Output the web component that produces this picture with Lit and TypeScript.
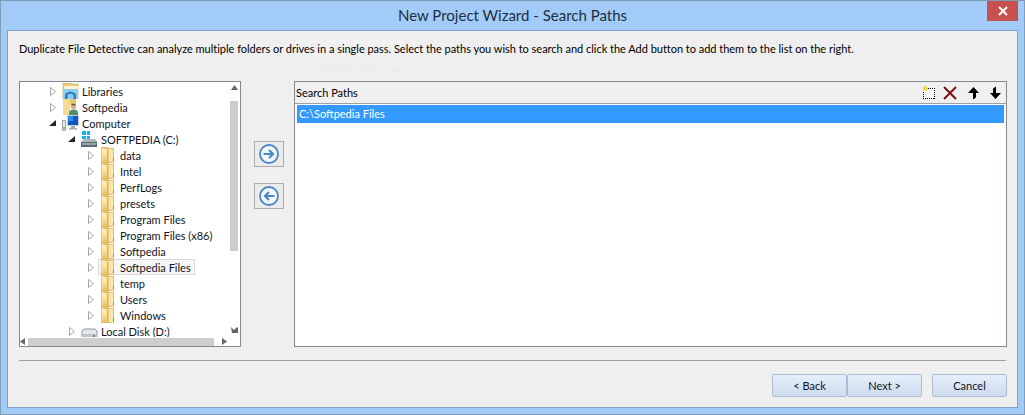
import { LitElement, html, css, svg } from "lit";
import { customElement } from "lit/decorators.js";

const folder = svg`<svg width="16" height="16" viewBox="0 0 16 16"><defs><linearGradient id="fg" x1="0" x2="0" y1="0" y2="1"><stop offset="0" stop-color="#fff0b4"/><stop offset=".6" stop-color="#f7dc8c"/><stop offset="1" stop-color="#e2bb5e"/></linearGradient></defs><path d="M1 0h7l1 1h5v15H1z" fill="#e3c16c"/><path d="M8 2h5v13H8z" fill="#f8e6a8"/><path d="M1 1l7 2v13l-7-1z" fill="url(#fg)"/><path d="M1 1v14h1V1z" fill="#f0cf7c"/><path d="M7 3h1.500v13H7z" fill="#d9ae55"/><path d="M13 11h1v3h-1z" fill="#4aa3d8"/></svg>`;
const drive = svg`<svg width="17" height="16" viewBox="0 0 17 16"><path d="M1 0h4v4H1zM6 0h3v4H6zM1 5h4v3H1zM6 5h3v3H6z" fill="#12b5ee"/><path d="M1 10l2-2h11l2 2v2H1z" fill="#aeb6bd"/><path d="M0 11h16v5H0z" fill="#5d6a76"/><path d="M1 12h14v2H1z" fill="#98a3ab"/><path d="M12 12h2v1h-2z" fill="#6fcf5a"/></svg>`;
const disk = svg`<svg width="17" height="16" viewBox="0 0 17 16"><path d="M1 8l2-2h11l2 2v8H1z" fill="#e4e7e9" stroke="#8d949a"/><path d="M1 11h15v5H1z" fill="#bcc2c7"/><path d="M12 12h2v3h-2z" fill="#5aa84a"/></svg>`;
const libs = svg`<svg width="17" height="16" viewBox="0 0 17 16"><path d="M1 0h7l1 1h7v15H1z" fill="#eccb7a" stroke="#caa656" stroke-width=".6"/><path d="M2 3h14v4H2z" fill="#fdf3cf"/><path d="M1 6h15v10H1z" fill="#8fcdf0"/><path d="M3 16v-5q5.500-5 11 0v5h-2.500v-4q-3-2.500-6 0v4z" fill="#2c7fc0"/></svg>`;
const user = svg`<svg width="17" height="16" viewBox="0 0 17 16"><path d="M1 0h7v16H1z" fill="#f5dc95"/><path d="M8 0h6v6H8z" fill="#e6c56f"/><circle cx="11.500" cy="7.500" r="2.800" fill="#d9b08c"/><path d="M7 16v-2q0-3.500 4.500-3.500T16 14v2z" fill="#4f8f6a"/><path d="M9 6q2.500-3 5 0l-1 .5h-3z" fill="#7a5a3c"/></svg>`;
const computer = svg`<svg width="17" height="16" viewBox="0 0 17 16"><path d="M0.500 5.500h3v10h-3z" fill="#e4e7e9" stroke="#7b858c" stroke-width=".7"/><path d="M1 12h2v2H1z" fill="#74c95c"/><path d="M5 0h12v11H5z" fill="#c7ced3"/><path d="M6 1h10v9H6z" fill="#1156c4"/><path d="M6 1h5v5H6z" fill="#2f8ee8"/><path d="M9 11h4v2H9zM7 13h8v1.500H7z" fill="#a3abb1"/></svg>`;

const open = svg`<svg width="9" height="8" viewBox="0 0 9 8"><path d="M7 1v6H0z" fill="#262626"/></svg>`;
const closed = svg`<svg width="9" height="9" viewBox="0 0 9 9"><path d="M1.500.5l5 4-5 4z" fill="#fff" stroke="#a6a6a6"/></svg>`;

const rows: [string, number, any, boolean, boolean?][] = [
  ["Libraries", 0, libs, false],
  ["Softpedia", 0, user, false],
  ["Computer", 0, computer, true],
  ["SOFTPEDIA (C:)", 1, drive, true],
  ["data", 2, folder, false],
  ["Intel", 2, folder, false],
  ["PerfLogs", 2, folder, false],
  ["presets", 2, folder, false],
  ["Program Files", 2, folder, false],
  ["Program Files (x86)", 2, folder, false],
  ["Softpedia", 2, folder, false],
  ["Softpedia Files", 2, folder, false, true],
  ["temp", 2, folder, false],
  ["Users", 2, folder, false],
  ["Windows", 2, folder, false],
  ["Local Disk (D:)", 1, disk, false],
];

@customElement("app-root")
export class AppRoot extends LitElement {
  static styles = css`
    :host { display: block; width: 1025px; height: 415px; overflow: hidden; font-family: Lato, "Noto Sans", sans-serif; font-size: 11px; color: #000; }
    * { box-sizing: border-box; }
    .frame { width: 1025px; height: 415px; background: #a3cbf7; border: 1px solid #7f9db9; display: flex; flex-direction: column; padding: 0 6px 6px; }
    .titlebar { height: 29px; flex: none; position: relative; display: flex; align-items: center; justify-content: center; }
    .title { font-size: 15px; color: #1b2f44; padding-bottom: 1px; }
    .close { position: absolute; right: 0; top: 0; width: 31px; height: 20px; background: #c75050; display: flex; align-items: center; justify-content: center; }
    .body { flex: 1; background: #efefef; border: 1px solid #7f9fc4; padding: 9px 11px 0 11px; display: flex; flex-direction: column; position: relative; }
    .intro { height: 17px; line-height: 17px; white-space: nowrap; position: relative; z-index: 1; letter-spacing: -0.02px; }
    .mark { position: absolute; left: 285px; top: 3px; font-size: 21px; letter-spacing: 1.500px; color: #f4f4f4; pointer-events: none; font-weight: 700; }
    .mark2 { position: absolute; left: 305px; top: 32px; font-size: 10.500px; color: #fafafa; text-shadow: 0 0 1px #cfcfcf; pointer-events: none; }
    .main { display: flex; margin-top: 24px; height: 266px; }
    .tree { width: 222px; border: 1px solid #828790; background: #fff; display: grid; grid-template-columns: 210px 10px; grid-template-rows: 255px 9px; flex: none; }
    .rows { padding-top: 1px; overflow: hidden; }
    .row { height: 16px; line-height: 14px; display: flex; align-items: center; white-space: nowrap; color: #10131f; }
    .row:last-child { height: 14px; align-items: flex-start; }
    .arrow { width: 13px; flex: none; display: flex; align-items: center; justify-content: flex-start; height: 16px; }
    .icon { width: 20px; height: 16px; flex: none; display: flex; align-items: center; }
    .lbl { padding-top: 2px; }
    .hl { display: flex; align-items: center; height: 16px; flex: none; }
    .hl.on { background: #f6f6f6; border: 1px solid #d9d9d9; margin-left: -2px; padding-left: 1px; width: 97px; }
    .hl.on .lbl { padding-top: 1px; }
    .vbar { grid-row: 1; grid-column: 2; display: flex; flex-direction: column; align-items: stretch; padding-right: 2px; }
    .vbar .a { height: 19px; display: flex; justify-content: center; padding-top: 3px; }
    .vbar .b { height: 11px; display: flex; justify-content: center; }
    .vbar .t { height: 150px; background: #cdcdcd; }
    .vbar .sp { flex: 1; }
    .hbar { grid-row: 2; grid-column: 1; display: flex; align-items: stretch; }
    .hbar .a { width: 8px; display: flex; align-items: center; flex: none; }
    .hbar .t { width: 186px; background: #cdcdcd; margin: 1px 0 0; }
    .hbar .r { margin-left: 7px; }
    .corner { grid-row: 2; grid-column: 2; }
    .mid { width: 53px; flex: none; display: flex; flex-direction: column; padding: 60px 0 0 13px; gap: 16px; }
    .side { width: 30px; height: 26px; background: #ebebeb; border: 1px solid #adadad; display: flex; align-items: center; justify-content: center; }
    .list { flex: none; width: 713px; border: 1px solid #828790; background: #fff; display: flex; flex-direction: column; }
    .head { height: 22px; flex: none; background: #f0f0f0; border-bottom: 1px solid #a0a0a0; display: flex; align-items: center; padding: 0 4px 0 1px; }
    .head span { flex: 1; }
    .tools { display: flex; align-items: center; }
    .t1 { margin-right: 7px; }
    .t2 { margin-right: 10px; }
    .t3 { margin-right: 9px; }
    .sel { margin: 1px 2px 0 2px; height: 18px; background: #3399ff; color: #fff; padding-left: 2px; line-height: 18px; }
    .sep { height: 1px; background: #a0a0a0; margin-top: 13px; width: 987px; flex: none; }
    .foot { display: flex; margin-top: 13px; justify-content: flex-end; width: 988px; }
    .btn { width: 75px; height: 23px; border: 1px solid #acbcd6; border-radius: 2px; background: linear-gradient(#e6effb, #cddbee); display: flex; align-items: center; justify-content: center; color: #10131f; }
    .gap { width: 10px; }
  `;

  render() {
    return html`<div class="frame">
      <div class="titlebar">
        <div class="title">New Project Wizard - Search Paths</div>
        <div class="close"><svg width="10" height="10" viewBox="0 0 10 10"><path d="M1 1l8 8M9 1l-8 8" stroke="#fff" stroke-width="2"/></svg></div>
      </div>
      <div class="body">
        <div class="mark">SOFTPEDIA</div>
        <div class="mark2">www.softpedia.com</div>
        <div class="intro">Duplicate File Detective can analyze multiple folders or drives in a single pass. Select the paths you wish to search and click the Add button to add them to the list on the right.</div>
        <div class="main">
          <div class="tree">
            <div class="rows">
              ${rows.map(([t, l, ic, o, on]) => html`<div class="row" style="padding-left:${29 + l * 19}px">
                <div class="arrow">${o ? open : closed}</div>
                <div class="hl ${on ? "on" : ""}"><div class="icon">${ic}</div><span class="lbl">${t}</span></div>
              </div>`)}
            </div>
            <div class="vbar">
              <div class="a"><svg width="7" height="5" viewBox="0 0 7 5"><path d="M3.500 0L7 5H0z" fill="#666"/></svg></div>
              <div class="t"></div><div class="sp"></div>
              <div class="b"><svg width="7" height="7" viewBox="0 0 7 7"><path d="M0 1l3 3 3-3 1 1v5H1z" fill="#666"/></svg></div>
            </div>
            <div class="hbar">
              <div class="a"><svg width="6" height="7" viewBox="0 0 6 7"><path d="M5 0v7L0 3.500z" fill="#666"/></svg></div>
              <div class="t"></div><div class="sp"></div>
              <div class="a r"><svg width="6" height="7" viewBox="0 0 6 7"><path d="M1 0v7l5-3.500z" fill="#666"/></svg></div>
            </div>
            <div class="corner"></div>
          </div>
          <div class="mid">
            <div class="side"><svg width="22" height="22" viewBox="0 0 22 22"><circle cx="11" cy="11" r="9" fill="#f4f8fc" stroke="#4a86c5" stroke-width="1.800"/><path d="M5.500 11h9M11 7l4 4-4 4" fill="none" stroke="#4a86c5" stroke-width="2.200"/></svg></div>
            <div class="side"><svg width="22" height="22" viewBox="0 0 22 22"><circle cx="11" cy="11" r="9" fill="#f4f8fc" stroke="#4a86c5" stroke-width="1.800"/><path d="M16.500 11h-9M11 7l-4 4 4 4" fill="none" stroke="#4a86c5" stroke-width="2.200"/></svg></div>
          </div>
          <div class="list">
            <div class="head"><span>Search Paths</span>
              <div class="tools">
                <svg class="t1" width="15" height="15" viewBox="0 0 15 15" shape-rendering="crispEdges"><rect x="2.500" y="3.500" width="11" height="10" fill="#f8f8f8" stroke="#000" stroke-dasharray="1 1"/><path d="M4 1v5M1.500 3.500h5M2 1.500l4 4M6 1.500l-4 4" stroke="#f0e020" stroke-width="1"/></svg>
                <svg class="t2" width="14" height="14" viewBox="0 0 14 14"><path d="M1 1l12 12M13 1L1 13" stroke="#7f1010" stroke-width="2"/></svg>
                <svg class="t3" width="13" height="14" viewBox="0 0 13 14"><path d="M6.500 1L12 7H9v4.500L6 13.500V7H1z" fill="#000"/></svg>
                <svg width="13" height="14" viewBox="0 0 13 14"><path d="M6.500 13L1 7h3V2.500L7 .5V7h5z" fill="#000"/></svg>
              </div>
            </div>
            <div class="sel">C:\\Softpedia Files</div>
          </div>
        </div>
        <div class="sep"></div>
        <div class="foot">
          <div class="btn">&lt; Back</div><div class="btn">Next &gt;</div><div class="gap"></div><div class="btn">Cancel</div>
        </div>
      </div>
    </div>`;
  }
}
